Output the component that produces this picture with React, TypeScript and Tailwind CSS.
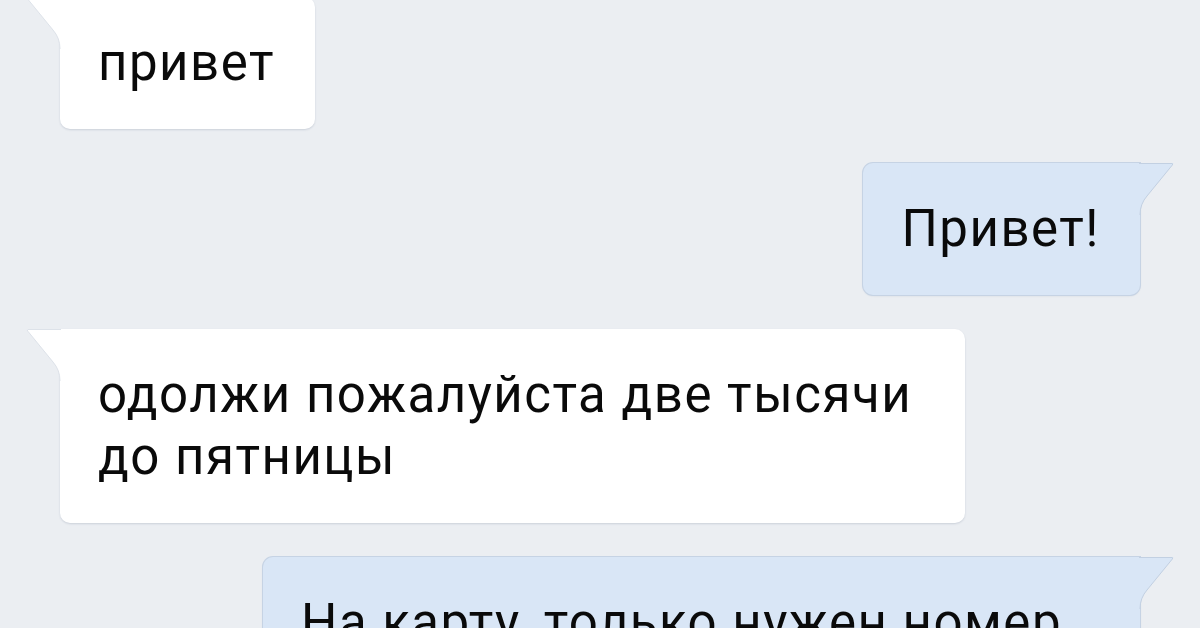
import React from 'react';

type Side = 'in' | 'out';

function Tail({ side }: { side: Side }) {
  if (side === 'in') {
    return (
      <svg className="absolute left-[-34px] top-0 w-[35px] h-[52px]" viewBox="0 0 35 52">
        <path d="M35 0 L2 0 Q0 0 1.5 2 L27 33 Q34 41 34 52 L35 52 Z" fill="#ffffff" />
        <path d="M35 0.5 L2 0.5 Q0.5 0.5 1.8 2.2 L27 33 Q34 41 34 52" fill="none" stroke="#dde2e9" strokeWidth="1" />
      </svg>
    );
  }
  return (
    <svg className="absolute right-[-34px] top-0 w-[35px] h-[52px]" viewBox="0 0 35 52">
      <path d="M0 0 L33 0 Q35 0 33.5 2 L8 33 Q1 41 1 52 L0 52 Z" fill="#d9e6f6" />
      <path d="M0 0.5 L33 0.5 Q34.5 0.5 33.2 2.2 L8 33 Q1 41 1 52" fill="none" stroke="#c2d0e2" strokeWidth="1" />
    </svg>
  );
}

function Bubble({ side, className, children }: { side: Side; className?: string; children: React.ReactNode }) {
  const isIn = side === 'in';
  return (
    <div
      className={`relative pl-[38px] pr-10 py-[35px] text-[51px] leading-[62px] tracking-[1.5px] text-[#0a0a0a] ${
        isIn
          ? 'self-start ml-[60px] bg-white rounded-[10px] rounded-tl-none shadow-[0_1px_2px_rgba(60,80,110,0.18)]'
          : 'self-end mr-[60px] bg-[#d9e6f6] rounded-[10px] rounded-tr-none shadow-[0_0_0_1px_#c6d3e4,0_1px_2px_rgba(60,80,110,0.15)]'
      } ${className ?? ''}`}
    >
      <Tail side={side} />
      {children}
    </div>
  );
}

export default function App() {
  return (
    <div
      className="w-[1200px] h-[628px] overflow-hidden bg-[#ebeef2] flex flex-col gap-[34px]"
      style={{ fontFamily: 'Roboto, "Noto Sans", sans-serif' }}
    >
      <Bubble side="in" className="-mt-[3px]">привет</Bubble>
      <Bubble side="out">Привет!</Bubble>
      <Bubble side="in" className="w-[905px]">одолжи пожалуйста две тысячи до пятницы</Bubble>
      <Bubble side="out" className="w-[877px]">На карту, только нужен номер карты</Bubble>
    </div>
  );
}
